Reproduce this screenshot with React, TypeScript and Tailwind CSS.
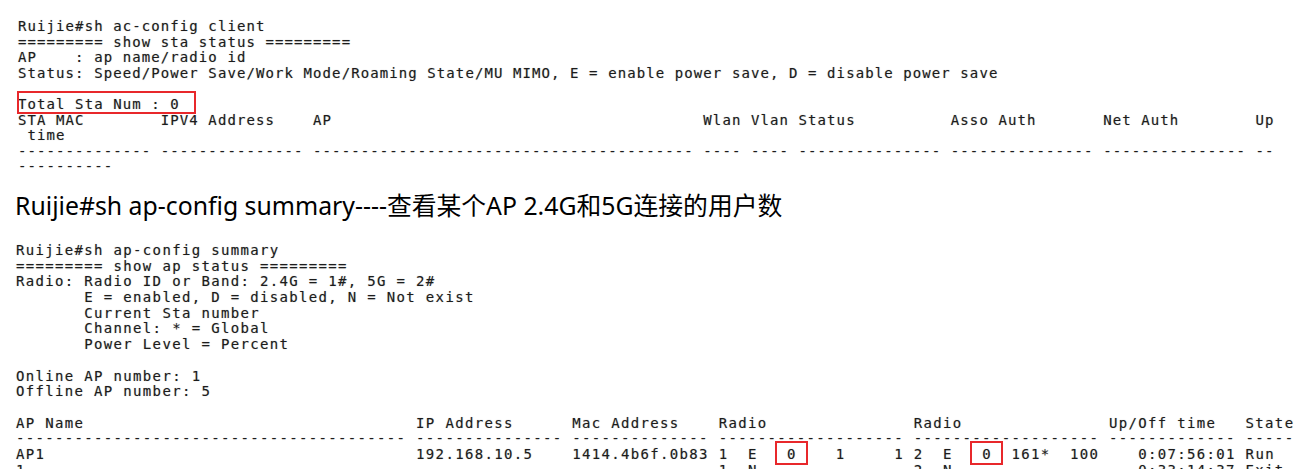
const pad = (s: string, n: number) => s.padEnd(n, " ");
const dash = (n: number) => "-".repeat(n);

function place(cols: { at: number; text: string }[], width: number) {
    const chars = Array(width).fill(" ");
    cols.forEach(({ at, text }) => {
        text.split("").forEach((c, i) => (chars[at + i] = c));
    });
    return chars.join("");
}

const staHeader =
    pad("STA MAC", 15) + pad("IPV4 Address", 16) + pad("AP", 41) + "Wlan Vlan " +
    pad("Status", 16) + pad("Asso Auth", 16) + pad("Net Auth", 16) + "Up";

const staDashes = [dash(14), dash(15), dash(40), dash(4), dash(4), dash(15), dash(15), dash(15), dash(2)].join(" ");

const apHeader =
    pad("AP Name", 41) + pad("IP Address", 16) + pad("Mac Address", 15) +
    pad("Radio", 20) + pad("Radio", 20) + pad("Up/Off time", 14) + "State";

const apDashes = [dash(40), dash(15), dash(14), dash(19), dash(19), dash(13), dash(5)].join(" ");

const row1 = place(
    [
        { at: 0, text: "AP1" },
        { at: 41, text: "192.168.10.5" },
        { at: 57, text: "1414.4b6f.0b83" },
        { at: 72, text: "1" },
        { at: 75, text: "E" },
        { at: 79, text: "0" },
        { at: 84, text: "1" },
        { at: 90, text: "1" },
        { at: 92, text: "2" },
        { at: 95, text: "E" },
        { at: 99, text: "0" },
        { at: 102, text: "161*" },
        { at: 108, text: "100" },
        { at: 115, text: "0:07:56:01" },
        { at: 126, text: "Run" },
    ],
    131
);

// second AP row, only its top shows at the bottom edge
const row2 = place(
    [
        { at: 0, text: "1" },
        { at: 72, text: "1" },
        { at: 75, text: "N" },
        { at: 92, text: "2" },
        { at: 95, text: "N" },
        { at: 115, text: "0:33:14:37" },
        { at: 126, text: "Exit" },
    ],
    131
);

function RedBox({ children, className }: { children: React.ReactNode; className: string }) {
    return (
        <span className="relative">
            {children}
            <span className={`absolute border-2 border-[#e8282b] ${className}`}></span>
        </span>
    );
}

export default function App() {
    const term =
        "whitespace-pre text-[#1c1c1c] text-[14px] [text-shadow:0_0_1px_rgba(0,0,0,0.35)] font-['DejaVu_Sans_Mono','Liberation_Mono',monospace]";

    return (
        <div className="w-[1312px] h-[469px] overflow-hidden bg-white">
            {/* show sta status */}
            <div className={`${term} pt-[19px] pl-[18px] leading-[15.6px] tracking-[1.09px]`}>
                <div>Ruijie#sh ac-config client</div>
                <div>========= show sta status =========</div>
                <div>AP    : ap name/radio id</div>
                <div>Status: Speed/Power Save/Work Mode/Roaming State/MU MIMO, E = enable power save, D = disable power save</div>
                <div>&nbsp;</div>
                <div>
                    <RedBox className="-left-[1px] -right-[16px] -top-[5px] -bottom-[2px]">Total Sta Num : 0</RedBox>
                </div>
                <div>{staHeader}</div>
                <div> time</div>
                <div>{staDashes}</div>
                <div>----------</div>
            </div>

            {/* caption */}
            <div className="mt-[15px] pl-[15px] text-[24.8px] leading-[30px] text-black font-['Noto_Sans','Noto_Sans_CJK_SC',sans-serif]">
                Ruijie#sh ap-config summary----查看某个AP 2.4G和5G连接的用户数
            </div>

            {/* show ap status */}
            <div className={`${term} mt-[23px] pl-[16px] leading-[15.7px] tracking-[1.33px]`}>
                <div>Ruijie#sh ap-config summary</div>
                <div>========= show ap status =========</div>
                <div>Radio: Radio ID or Band: 2.4G = 1#, 5G = 2#</div>
                <div>       E = enabled, D = disabled, N = Not exist</div>
                <div>       Current Sta number</div>
                <div>       Channel: * = Global</div>
                <div>       Power Level = Percent</div>
                <div>&nbsp;</div>
                <div>Online AP number: 1</div>
                <div>Offline AP number: 5</div>
                <div>&nbsp;</div>
                <div>{apHeader}</div>
                <div>{apDashes}</div>
                <div>
                    {row1.slice(0, 79)}
                    <RedBox className="-left-[12px] -right-[11px] -top-[5px] -bottom-[3px]">{row1.slice(79, 80)}</RedBox>
                    {row1.slice(80, 99)}
                    <RedBox className="-left-[12px] -right-[11px] -top-[5px] -bottom-[3px]">{row1.slice(99, 100)}</RedBox>
                    {row1.slice(100)}
                </div>
                <div>{row2}</div>
            </div>
        </div>
    );
}
